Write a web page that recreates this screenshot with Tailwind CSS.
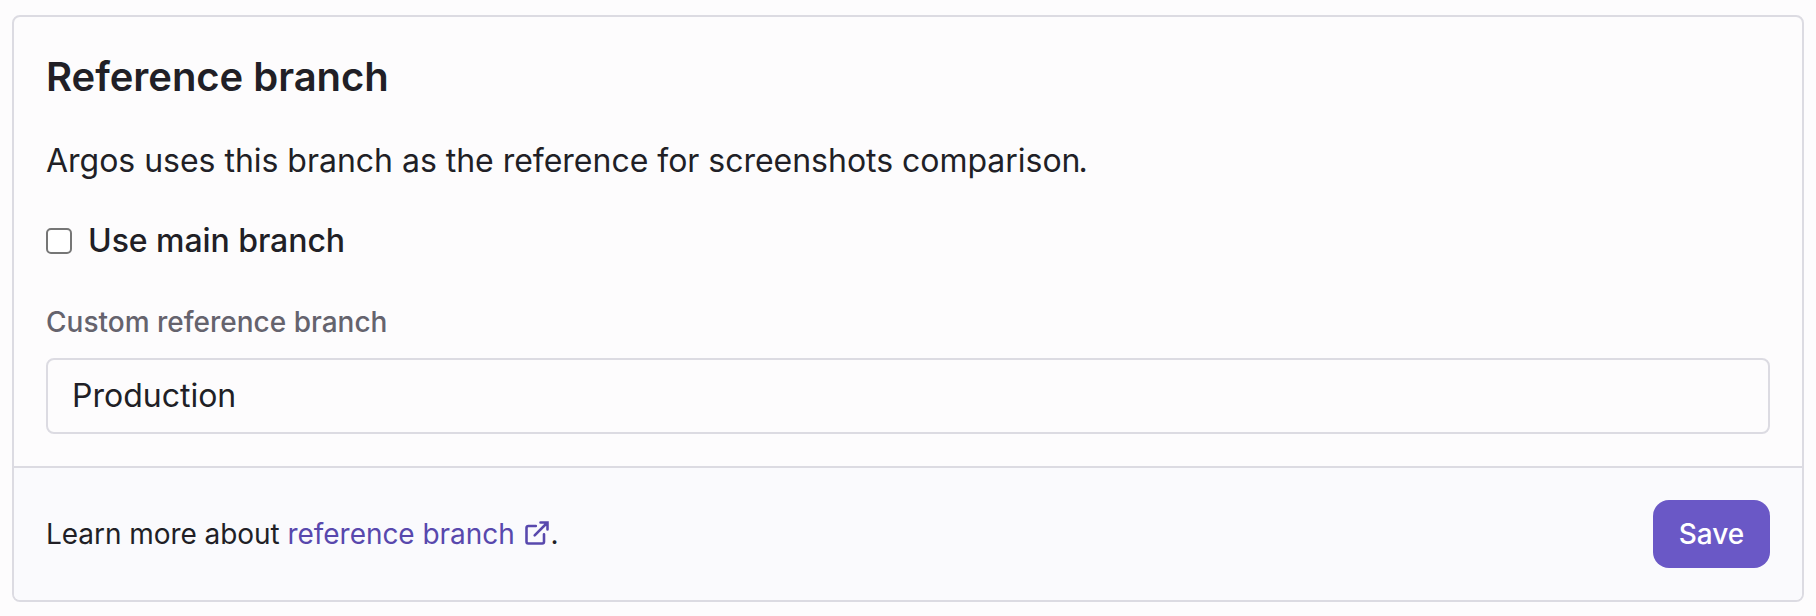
<!DOCTYPE html>
<html lang="en"><head><meta charset="utf-8"><title>Reference branch</title>
<script src="https://cdn.jsdelivr.net/npm/@tailwindcss/browser@4"></script></head>
<body class="h-[616px] overflow-hidden bg-[#fdfcfd] pt-[15px] pl-[12px] font-[Inter,sans-serif] text-[#211f26] antialiased">
<form class="flex h-[587px] w-[1792px] flex-col overflow-hidden rounded-lg border-2 border-[#dcdbe2]">
<div class="flex flex-col px-8 pt-8">
<h2 class="mt-[4px] text-[40px] leading-[48px] font-semibold tracking-[-0.04px]">Reference branch</h2>
<p class="mt-[36px] text-[32px] leading-[48px] tracking-[-0.02px]">Argos uses this branch as the reference for screenshots comparison<span class="-ml-[2px]">.</span></p>
<label class="mt-[32px] flex items-center gap-4 text-[32px] leading-[48px] font-medium tracking-[-0.055px]"><span class="size-[26px] rounded-[5px] border-2 border-[#767676] bg-white"></span>Use main branch</label>
<label class="mt-[37px] text-[28px] leading-[40px] font-medium text-[#65636d]">Custom reference branch</label>
<div class="mt-[16px] flex h-[76px] items-center rounded-lg border-2 border-[#dcdbe2] px-6 text-[32px]">Production</div>
</div>
<div class="mt-[32px] flex flex-1 items-center justify-between border-t-2 border-[#dcdbe2] bg-[#fafafd] px-8 text-[28px]">
<div class="tracking-[-0.05px]">Learn more about <a class="text-[#5848ad]">reference branch <svg class="mt-[-6px] ml-px inline size-7" viewBox="0 0 24 24" fill="none" stroke="currentColor" stroke-width="2.2" stroke-linecap="round"><path d="M15 3h6v6M10 14 21 3M18 13v6.5a1.5 1.5 0 0 1-1.500 1.500H4.500a1.500 1.500 0 0 1-1.500-1.500V7.500a1.500 1.500 0 0 1 1.500-1.500H11"/></svg></a><span class="-ml-px">.</span></div>
<button class="h-[68px] w-[117px] rounded-2xl bg-[#6a58c6] font-medium text-white">Save</button>
</div></form></body></html>
